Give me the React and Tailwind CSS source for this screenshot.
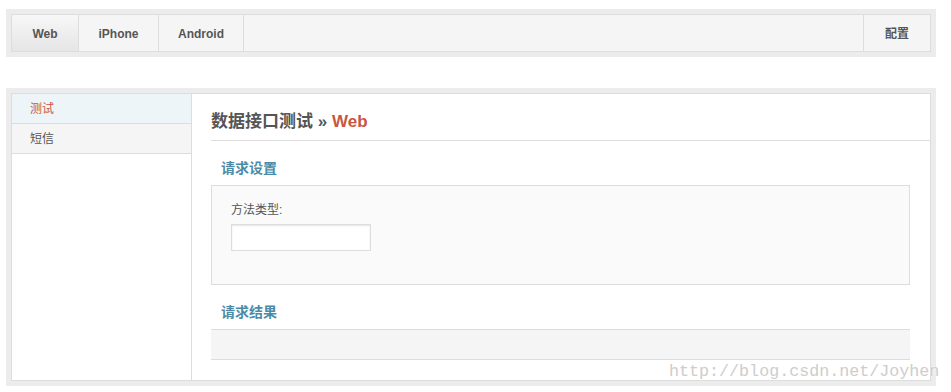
const tabs = [
  { label: 'Web', w: 'w-[67px]', active: true },
  { label: 'iPhone', w: 'w-[80px]' },
  { label: 'Android', w: 'w-[85px]' },
]

const cn = { fontFamily: '"Liberation Sans", Arial, "Noto Sans CJK SC", sans-serif' }

const App = () => {
  return (
    <div className="relative w-[951px] h-[392px] bg-white overflow-hidden" style={cn}>
      {/* Top nav */}
      <div className="mt-[9px] ml-[6px] w-[930px] bg-[#ececec] p-[5px]">
        <div className="flex h-[38px] border border-[#dddddd] bg-[#f5f5f5] text-[12px] font-bold text-[#555555]">
          {tabs.map((t) => (
            <div
              key={t.label}
              className={
                t.active
                  ? `${t.w} flex items-center justify-center pt-[2px] border-r border-[#dddddd] bg-gradient-to-b from-[#f7f7f7] to-[#e5e5e5]`
                  : `${t.w} flex items-center justify-center pt-[2px] border-r border-[#dddddd]`
              }
            >
              {t.label}
            </div>
          ))}
          <div className="flex-1" />
          <div className="w-[67px] flex items-center justify-center pt-[2px] border-l border-[#dddddd]">配置</div>
        </div>
      </div>

      {/* Main panel */}
      <div className="mt-[31px] ml-[6px] w-[930px] bg-[#ececec] p-[5px]">
        <div className="flex h-[288px] border border-[#dddddd] bg-white">
          {/* Sidebar */}
          <div className="w-[180px] shrink-0 border-r border-[#dddddd] text-[12px]">
            <div className="h-[30px] flex items-center pl-[18px] border-b border-[#dddddd] bg-[#eef5f8] text-[#c8573e]">
              测试
            </div>
            <div className="h-[30px] flex items-center pl-[18px] border-b border-[#dddddd] bg-[#f5f5f5] text-[#555555]">
              短信
            </div>
          </div>

          {/* Content */}
          <div className="flex-1 pl-[19px]">
            <div className="pt-[18px] pb-[8px] leading-[20px] text-[17px] font-bold text-[#555555] border-b border-[#dddddd]">
              数据接口测试 <span className="text-[#4a5a6a]">»</span>{' '}
              <span className="text-[#c8573e]">Web</span>
            </div>

            <div className="mt-[17px] mb-[7px] pl-[10px] leading-[20px] text-[14px] font-bold text-[#4a8ca8]">
              请求设置
            </div>
            <div className="mr-[20px] h-[100px] border border-[#dddddd] bg-[#fafafa] px-[19px] pt-[16px]">
              <div className="text-[12px] leading-[16px] text-[#555555]">方法类型:</div>
              <input
                type="text"
                className="mt-[6px] block w-[140px] h-[27px] border border-[#dddddd] bg-white shadow-[inset_0_1px_2px_rgba(0,0,0,0.1)] outline-none"
              />
            </div>

            <div className="mt-[17px] mb-[7px] pl-[10px] leading-[20px] text-[14px] font-bold text-[#4a8ca8]">
              请求结果
            </div>
            <div className="mr-[20px] h-[31px] border-y border-[#dddddd] bg-[#f5f5f5]" />
          </div>
        </div>
      </div>

      {/* Watermark */}
      <div
        className="absolute left-[669px] top-[362px] text-[16.7px] leading-[20px] text-[#cdcdcd] whitespace-nowrap [text-shadow:0_0_2px_#ffffff]"
        style={{ fontFamily: '"Liberation Mono", "Courier New", monospace' }}
      >
        http://blog.csdn.net/Joyhen
      </div>
    </div>
  )
}

export default App
